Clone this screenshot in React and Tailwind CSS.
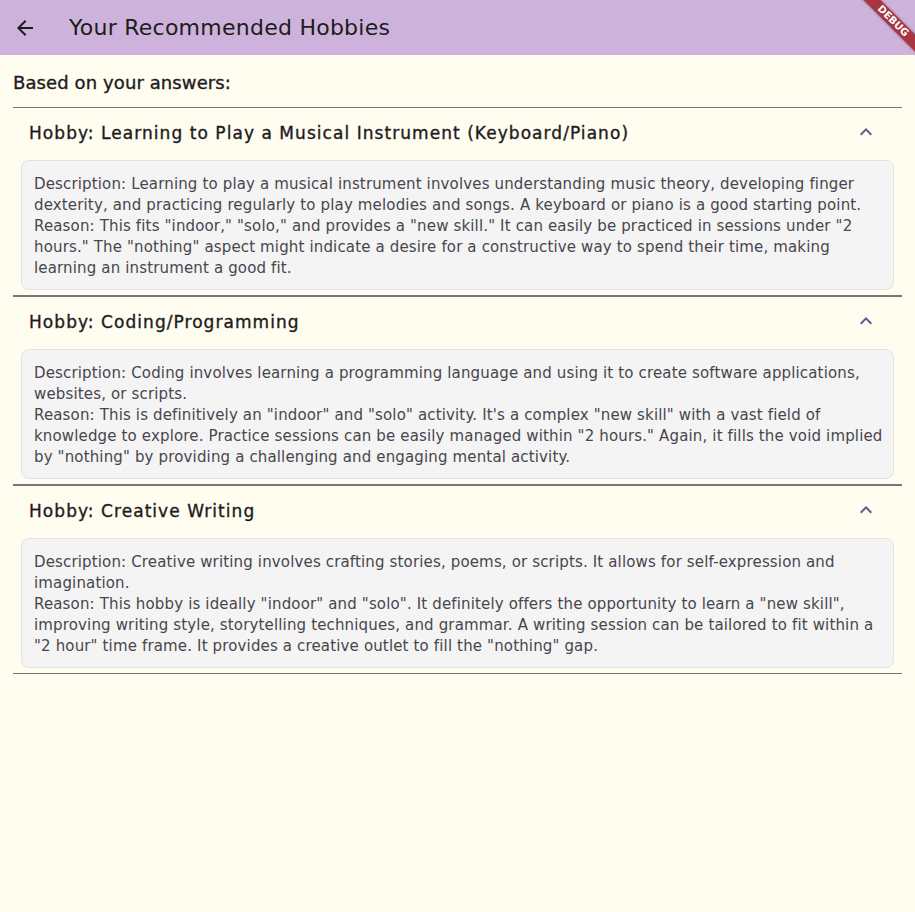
import React from "react";

const font = { fontFamily: '"DejaVu Sans", "Noto Sans", sans-serif' };

function Chevron() {
  return (
    <svg width="24" height="24" viewBox="0 0 24 24" className="fill-[#65558f]">
      <path d="M12 8l-6 6 1.41 1.41L12 10.83l4.59 4.58L18 14z" />
    </svg>
  );
}

function Tile({ title, lines }) {
  return (
    <div className="border-y border-[#79747e]">
      <div className="h-[48px] flex items-center justify-between pl-4 pr-6">
        <div className="text-[17px] leading-[24px] tracking-[1.05px] text-[#1d1b20] whitespace-nowrap [-webkit-text-stroke:0.35px_#1d1b20] pt-[2px]">{title}</div>
        <Chevron />
      </div>
      <div className="mt-1 mb-[5px] mx-2 h-[130px] rounded-lg border border-[#e2e2e2] bg-[#f4f4f4] px-3 pt-[13px]">
        {lines.map((l, i) => (
          <div key={i} className="text-[15px] leading-[21px] tracking-[0.15px] text-[#48464c] whitespace-nowrap">{l}</div>
        ))}
      </div>
    </div>
  );
}

const tiles = [
  {
    title: "Hobby: Learning to Play a Musical Instrument (Keyboard/Piano)",
    lines: [
      "Description: Learning to play a musical instrument involves understanding music theory, developing finger",
      "dexterity, and practicing regularly to play melodies and songs. A keyboard or piano is a good starting point.",
      "Reason: This fits \"indoor,\" \"solo,\" and provides a \"new skill.\" It can easily be practiced in sessions under \"2",
      "hours.\" The \"nothing\" aspect might indicate a desire for a constructive way to spend their time, making",
      "learning an instrument a good fit.",
    ],
  },
  {
    title: "Hobby: Coding/Programming",
    lines: [
      "Description: Coding involves learning a programming language and using it to create software applications,",
      "websites, or scripts.",
      "Reason: This is definitively an \"indoor\" and \"solo\" activity. It's a complex \"new skill\" with a vast field of",
      "knowledge to explore. Practice sessions can be easily managed within \"2 hours.\" Again, it fills the void implied",
      "by \"nothing\" by providing a challenging and engaging mental activity.",
    ],
  },
  {
    title: "Hobby: Creative Writing",
    lines: [
      "Description: Creative writing involves crafting stories, poems, or scripts. It allows for self-expression and",
      "imagination.",
      "Reason: This hobby is ideally \"indoor\" and \"solo\". It definitely offers the opportunity to learn a \"new skill\",",
      "improving writing style, storytelling techniques, and grammar. A writing session can be tailored to fit within a",
      "\"2 hour\" time frame. It provides a creative outlet to fill the \"nothing\" gap.",
    ],
  },
];

export default function App() {
  return (
    <div style={font} className="relative w-[915px] h-[912px] overflow-hidden bg-[#fffcf0]">
      <div className="h-[55px] bg-[#cdb3db] flex items-center">
        <div className="w-[24px] h-[24px] ml-[13px]">
          <svg width="24" height="24" viewBox="0 0 24 24" className="fill-[#1d1b20]">
            <path d="M20 11H7.83l5.59-5.59L12 4l-8 8 8 8 1.41-1.41L7.83 13H20v-2z" />
          </svg>
        </div>
        <div className="ml-[32px] text-[22px] tracking-[0.25px] text-[#1d1b20]">Your Recommended Hobbies</div>
      </div>
      <div className="px-[13px] pt-[16px]">
        <div className="h-[24px] leading-[24px] text-[18px] tracking-[0.1px] text-[#1d1b20] [-webkit-text-stroke:0.35px_#1d1b20] mb-3">Based on your answers:</div>
        {tiles.map((t, i) => (
          <Tile key={i} title={t.title} lines={t.lines} />
        ))}
      </div>
      <div className="absolute left-[813px] top-[15px] w-[160px] h-[12px] rotate-45 bg-[#a8353f] flex items-center justify-center shadow-[0_0_3px_rgba(0,0,0,0.4)]">
        <span className="text-[10px] leading-[12px] font-bold text-white">DEBUG</span>
      </div>
    </div>
  );
}
